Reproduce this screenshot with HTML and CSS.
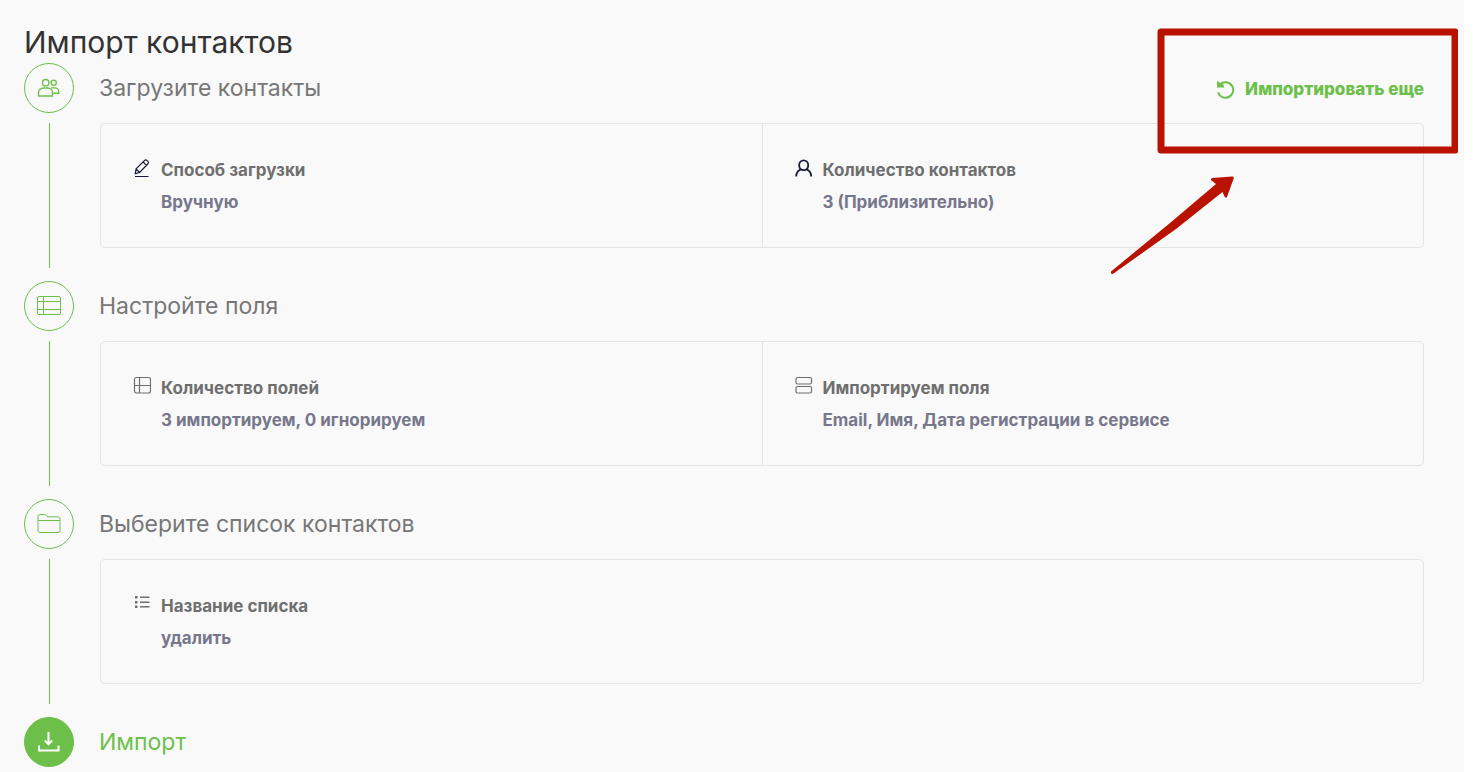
FILE: index.html
```
<!DOCTYPE html>
<html lang="ru">
<head>
<meta charset="utf-8">
<meta name="viewport" content="width=device-width, initial-scale=1">
<title>Импорт контактов</title>
<link rel="stylesheet" href="styles.css">
</head>
<body>
<main class="page">
  <h1 class="page-title">Импорт контактов</h1>
  <ol class="steps">
    <li class="step">
      <div class="rail">
        <span class="badge">
          <svg width="24" height="24" viewBox="0 0 24 24" fill="none" stroke="currentColor" stroke-width="1.4" aria-hidden="true"><circle cx="8.7" cy="6.700" r="3.2"/><circle cx="16.700" cy="6.700" r="2.6"/><path d="M1.500 20v-3.200a4.800 4.800 0 0 1 4.800-4.800h4.400a4.800 4.800 0 0 1 4.800 4.800v3.200zM14 11.900h3.800a4 4 0 0 1 4 4v1.300h-6.200"/></svg>
        </span>
        <span class="line"></span>
      </div>
      <div class="content">
        <div class="head">
          <h2 class="step-title">Загрузите контакты</h2>
          <button class="again" type="button">
            <svg width="20" height="20" viewBox="0 0 20 20" aria-hidden="true"><path d="M4.200 5.200A7.800 7.800 0 1 1 2 13.200" fill="none" stroke="currentColor" stroke-width="2"/><path d="M1 1.500l2.200 2L7 5l1.500 3.500H1z" fill="currentColor"/></svg>
            Импортировать еще
          </button>
        </div>
        <dl class="card">
          <div class="cell">
            <svg class="icon icon-dark" width="18" height="20" viewBox="0 0 18 20" fill="none" stroke="currentColor" stroke-width="1.2" aria-hidden="true"><path d="M2.200 15.600l.9-4.700L11.400 2.600a2 2 0 0 1 2.800 0l.6.6a2 2 0 0 1 0 2.800L6.600 14.500zM10.200 4l3.300 3.300M3.100 10.900l3.500 3.600M2 18.500h13.500"/></svg>
            <dt>Способ загрузки</dt>
            <dd>Вручную</dd>
          </div>
          <div class="cell">
            <svg class="icon icon-dark" width="18" height="20" viewBox="0 0 18 20" fill="none" stroke="currentColor" stroke-width="1.8" aria-hidden="true"><rect x="4.200" y="2.300" width="9" height="9.800" rx="4.500"/><path d="M1.200 18.600c.1-4 1.500-6.200 4.600-7.300M16.200 18.600c-.1-4-1.500-6.200-4.600-7.300"/></svg>
            <dt>Количество контактов</dt>
            <dd>3 (Приблизительно)</dd>
          </div>
        </dl>
      </div>
    </li>
    <li class="step">
      <div class="rail">
        <span class="badge">
          <svg width="24" height="24" viewBox="0 0 24 24" fill="none" stroke="currentColor" aria-hidden="true"><rect x="0.500" y="2.500" width="23" height="18" rx="1.500"/><path d="M6.500 2.500v18M.5 7.500h23M.5 15.500h23"/></svg>
        </span>
        <span class="line"></span>
      </div>
      <div class="content">
        <div class="head"><h2 class="step-title">Настройте поля</h2></div>
        <dl class="card">
          <div class="cell">
            <svg class="icon" width="18" height="20" viewBox="0 0 18 20" fill="none" stroke="currentColor" stroke-width="1.200" aria-hidden="true"><rect x="1.500" y="1.500" width="16" height="15.500" rx="2"/><path d="M6.500 1.500V17M1.500 9.500h16"/></svg>
            <dt>Количество полей</dt>
            <dd>3 импортируем, 0 игнорируем</dd>
          </div>
          <div class="cell">
            <svg class="icon" width="18" height="20" viewBox="0 0 18 20" fill="none" stroke="currentColor" stroke-width="1.200" aria-hidden="true"><rect x="1" y="1.500" width="15.500" height="6.500" rx="1.500"/><rect x="1" y="10.500" width="15.500" height="6.500" rx="1.500"/></svg>
            <dt>Импортируем поля</dt>
            <dd>Email, Имя, Дата регистрации в сервисе</dd>
          </div>
        </dl>
      </div>
    </li>
    <li class="step">
      <div class="rail">
        <span class="badge">
          <svg width="24" height="24" viewBox="0 0 24 24" fill="none" stroke="currentColor" aria-hidden="true"><path d="M1 4.500a2 2 0 0 1 2-2h4.600c1 0 1.400.3 1.900 1.200.4.700.8 1.100 1.800 1.100H21a2 2 0 0 1 2 2V18.500a2 2 0 0 1-2 2H3a2 2 0 0 1-2-2zM1 8.500h22"/></svg>
        </span>
        <span class="line"></span>
      </div>
      <div class="content">
        <div class="head"><h2 class="step-title">Выберите список контактов</h2></div>
        <dl class="card">
          <div class="cell">
            <svg class="icon" width="18" height="20" viewBox="0 0 18 20" fill="currentColor" aria-hidden="true"><path d="M2 2h2.500v2.500H2zM2 7h2.500v2.500H2zM2 11.500h2.500V14H2zM7 2.500h9.500V4H7zM7 7.500h9.500V9H7zM7 12h9.500v1.500H7z"/></svg>
            <dt>Название списка</dt>
            <dd>удалить</dd>
          </div>
        </dl>
      </div>
    </li>
    <li class="step step-active">
      <div class="rail">
        <span class="badge">
          <svg width="24" height="24" viewBox="0 0 24 24" fill="none" stroke="currentColor" stroke-width="2" aria-hidden="true"><path d="M11.500 2v12M7.800 10.500l3.700 3.800 3.700-3.800M2 15.500v5h19.500v-5"/></svg>
        </span>
      </div>
      <div class="content">
        <div class="head"><h2 class="step-title">Импорт</h2></div>
      </div>
    </li>
  </ol>
  <svg class="marker" width="350" height="260" viewBox="0 0 350 260" aria-hidden="true">
    <rect x="53" y="12" width="294" height="118" fill="none" stroke="#b91200" stroke-width="7" stroke-linejoin="round"/>
    <path d="M3 251.500L62 203L108 164L103.500 160.500Q102 158.500 104.500 158L124 156.500Q126.500 156.500 125.500 159L119 177Q117.500 178.500 116.500 176.500L114.500 172L68 209L5.500 253.500Q2.500 255 3 251.500z" fill="#b91200"/>
  </svg>
</main>
</body>
</html>
```
FILE: styles.css
```
* {
  box-sizing: border-box;
}

body {
  margin: 0;
  background: #fff;
  color: #6f6f6f;
  font-family: Inter, "Liberation Sans", sans-serif;
  font-size: 17px;
  line-height: 32px;
}

.page {
  position: relative;
  min-height: 100vh;
  margin-right: 13px;
  padding: 23px 40px 0 24px;
  background: #f9f9f9;
  overflow: hidden;
}

.page-title {
  margin: 0 0 2px;
  color: #333;
  font-size: 30px;
  font-weight: 400;
  line-height: 38px;
}

.steps {
  margin: 0;
  padding: 0;
  list-style: none;
}

.step {
  display: flex;
  gap: 25px;
}

.rail {
  display: flex;
  flex: none;
  flex-direction: column;
  align-items: center;
  width: 50px;
  color: #6cc04a;
}

.badge {
  display: flex;
  align-items: center;
  justify-content: center;
  width: 50px;
  height: 50px;
  border: 1px solid #6cc04a;
  border-radius: 50%;
}

.line {
  flex: 1;
  width: 1px;
  margin: 10px 0 13px;
  background: #6cc04a;
}

.content {
  flex: 1;
  min-width: 0;
}

.head {
  display: flex;
  align-items: center;
  justify-content: space-between;
  height: 50px;
}

.step-title {
  margin: 0;
  color: #777;
  font-size: 23px;
  font-weight: 400;
}

.again {
  display: flex;
  align-items: center;
  gap: 9px;
  padding: 2px 0 0;
  border: 0;
  background: none;
  color: #6cc04a;
  font: inherit;
  font-weight: 800;
  cursor: pointer;
}

.card {
  display: flex;
  margin: 10px 0 33px 1px;
  border: 1px solid #e3e3e3;
  border-radius: 5px;
}

.cell {
  display: grid;
  flex: 1;
  grid-template-columns: 18px 1fr;
  column-gap: 10px;
  padding: 30px 32px 29px;
  font-weight: 700;
}

.cell + .cell {
  border-left: 1px solid #e3e3e3;
}

.icon {
  margin-top: 4px;
}

.icon-dark {
  color: #1a1a3c;
}

.cell dd {
  grid-column: 2;
  margin: 0;
  color: #77778c;
}

.step-active .badge {
  background: #6cc04a;
  color: #fff;
}

.step-active .step-title {
  color: #6cc04a;
}

.marker {
  position: absolute;
  top: 20px;
  right: 6px;
}
```
